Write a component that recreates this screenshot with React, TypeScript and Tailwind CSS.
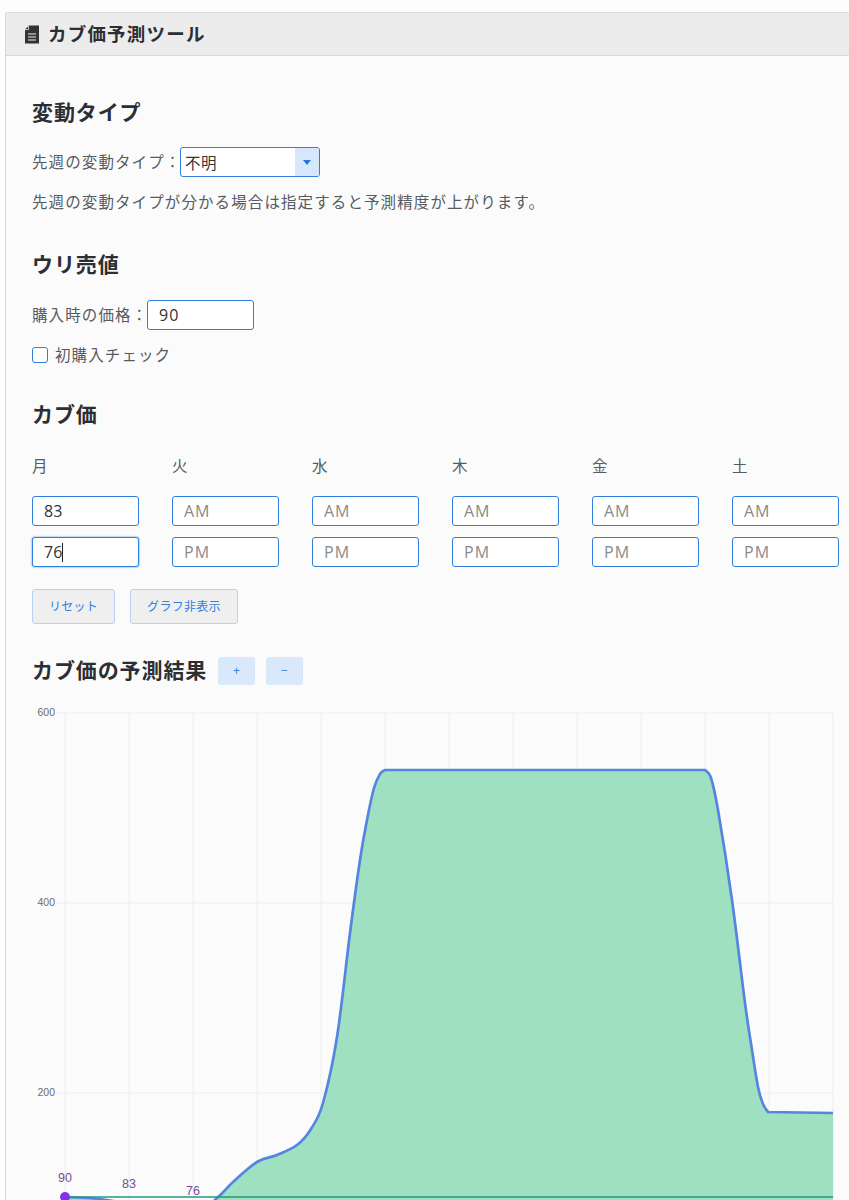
import React from "react";

const days = ["月", "火", "水", "木", "金", "土"];
const gridX = [65, 129, 193, 257, 321, 385, 449, 513, 577, 641, 705, 769, 833];
const gridY = [713, 903, 1093];

const rise: [number, number][] = [
  [65, 1197], [100, 1199], [129, 1204], [193, 1215], [217, 1198], [233, 1182], [257, 1162],
  [277, 1155], [297, 1145], [311, 1129], [323, 1103], [337, 1037], [350, 933], [360, 860],
  [367, 820], [374, 788], [380, 774], [385, 770],
];
const fall: [number, number][] = [
  [705, 770], [711, 778], [718, 810], [732, 900], [745, 1003], [752, 1050], [758, 1087], [763, 1104], [768, 1112],
];

function smooth(pts: [number, number][]) {
  let d = "";
  for (let i = 0; i < pts.length - 1; i++) {
    const p0 = pts[Math.max(0, i - 1)];
    const p1 = pts[i];
    const p2 = pts[i + 1];
    const p3 = pts[Math.min(pts.length - 1, i + 2)];
    const c1x = p1[0] + (p2[0] - p0[0]) / 6;
    const c1y = p1[1] + (p2[1] - p0[1]) / 6;
    const c2x = p2[0] - (p3[0] - p1[0]) / 6;
    const c2y = p2[1] - (p3[1] - p1[1]) / 6;
    d += ` C${c1x.toFixed(1)} ${c1y.toFixed(1)} ${c2x.toFixed(1)} ${c2y.toFixed(1)} ${p2[0]} ${p2[1]}`;
  }
  return d;
}
const line = `M65 1197${smooth(rise)} L705 770${smooth(fall)} L833 1113`;

function Heading({ children, className = "" }: { children: React.ReactNode; className?: string }) {
  return <h2 className={`whitespace-nowrap text-[21px] font-bold leading-[28px] tracking-[0.9px] text-[#2b2f33] ${className}`}>{children}</h2>;
}

function Field({ value, placeholder, focused }: { value?: string; placeholder?: string; focused?: boolean }) {
  return (
    <input
      readOnly
      value={value}
      placeholder={placeholder}
      className={`block h-[30px] w-[107px] rounded-[3px] border border-[#2f7fe0] bg-white pl-[11px] text-[16px] text-[#333] outline-none placeholder:tracking-[1px] placeholder:text-[#8a8a8a] ${focused ? "shadow-[0_0_2px_#2f7fe0]" : ""}`}
    />
  );
}

export default function App() {
  return (
    <div
      className="h-[1200px] w-[849px] overflow-hidden bg-[#fdfdfd] pl-[5px] pt-3 text-[#555b61]"
      style={{ fontFamily: '"Open Sans", "Noto Sans CJK JP", sans-serif' }}
    >
      <div className="h-[1300px] w-[860px] rounded-tl-[2px] border border-r-0 border-[#d9d9d9] bg-[#fbfbfc]">
        <div className="flex h-[43px] items-center gap-[8px] border-b border-[#d9d9d9] bg-[#ececec] pl-[18px]">
          <svg width="16" height="19" viewBox="0 0 16 19" className="shrink-0">
            <path d="M5 0.5h10v18H1V4.5z" fill="#333" />
            <path d="M4 9h8M4 12h8M4 15h8" stroke="#ececec" strokeWidth="1" />
            <path d="M4.6 1v3.6H1" stroke="#ececec" strokeWidth="0.8" fill="none" />
          </svg>
          <h1 className="whitespace-nowrap text-[18.5px] font-bold tracking-[1.2px] text-[#2b2f33]">カブ価予測ツール</h1>
        </div>

        <div className="pl-[26px]">
          <Heading className="mt-[42px]">変動タイプ</Heading>
          <div className="mt-[21px] flex h-[30px] items-center text-[15.5px] tracking-[1.1px]">
            <span className="w-[148px] shrink-0 whitespace-nowrap pt-[2px]">先週の変動タイプ：</span>
            <div className="flex h-[30px] w-[140px] overflow-hidden rounded-[3px] border border-[#2f7fe0] bg-white">
              <span className="flex-1 pl-[4px] leading-[30px] tracking-[0.5px] text-[#333]">不明</span>
              <span className="flex w-[24px] items-center justify-center bg-[#d6e6fb]">
                <span className="h-0 w-0 border-x-[4px] border-t-[5px] border-x-transparent border-t-[#1f78e0]" />
              </span>
            </div>
          </div>
          <p className="mt-[13px] whitespace-nowrap text-[15.5px] leading-[24px] tracking-[1.1px]">
            先週の変動タイプが分かる場合は指定すると予測精度が上がります。
          </p>

          <Heading className="mt-[36px]">ウリ売値</Heading>
          <div className="mt-[22px] flex h-[30px] items-center text-[15.5px] tracking-[1.1px]">
            <span className="w-[115px] shrink-0 whitespace-nowrap pt-[2px]">購入時の価格：</span>
            <Field value="90" />
          </div>
          <label className="mt-[14px] flex h-[22px] items-center gap-[7px] text-[15.5px] tracking-[1.1px]">
            <span className="block h-[16px] w-[16px] rounded-[3px] border border-[#2f7fe0] bg-white" />
            <span className="pt-[2px]">初購入チェック</span>
          </label>

          <Heading className="mt-[34px]">カブ価</Heading>
          <div className="mt-[26px] grid w-[807px] grid-cols-[repeat(6,107px)] gap-x-[33px]">
            {days.map((d) => (
              <div key={d} className="text-[15.5px] leading-[24px]">{d}</div>
            ))}
          </div>
          <div className="mt-[18px] grid w-[807px] grid-cols-[repeat(6,107px)] gap-x-[33px] gap-y-[11px]">
            {days.map((d, i) => (
              <Field key={d} value={i === 0 ? "83" : undefined} placeholder="AM" />
            ))}
            {days.map((d, i) => (
              <div key={d} className="relative">
                <Field value={i === 0 ? "76" : undefined} placeholder="PM" focused={i === 0} />
                {i === 0 && <span className="absolute left-[30px] top-[6px] h-[19px] w-px bg-[#222]" />}
              </div>
            ))}
          </div>

          <div className="mt-[22px] flex gap-[15px]">
            <button className="h-[35px] w-[83px] rounded-[3px] border border-[#b5d2f5] bg-[#efefef] text-[12px] tracking-[0.2px] text-[#2f7fe0]">リセット</button>
            <button className="h-[35px] w-[108px] rounded-[3px] border border-[#b5d2f5] bg-[#efefef] text-[12px] tracking-[0.3px] text-[#2f7fe0]">グラフ非表示</button>
          </div>

          <div className="mt-[33px] flex h-[28px] items-center">
            <Heading className="w-[186px] shrink-0 pb-[2px]">カブ価の予測結果</Heading>
            <button className="h-[28px] w-[37px] rounded-[3px] bg-[#d9e8fb] text-[12px] text-[#2f7fe0]">+</button>
            <button className="ml-[11px] h-[28px] w-[37px] rounded-[3px] bg-[#d9e8fb] text-[12px] text-[#2f7fe0]">−</button>
          </div>

          <svg width="817" height="495" viewBox="32 705 817 495" className="mt-[20px] block" style={{ fontFamily: '"Liberation Sans", sans-serif' }}>
            {gridX.map((x) => (
              <line key={x} x1={x} y1={713} x2={x} y2={1200} stroke="#ededef" strokeWidth="1" />
            ))}
            {gridY.map((y) => (
              <line key={y} x1={57} y1={y} x2={833} y2={y} stroke="#ededef" strokeWidth="1" />
            ))}
            <text x="55" y="716" textAnchor="end" fontSize="10.5" fill="#6b6b6b">600</text>
            <text x="55" y="906" textAnchor="end" fontSize="10.5" fill="#6b6b6b">400</text>
            <text x="55" y="1096" textAnchor="end" fontSize="10.5" fill="#6b6b6b">200</text>
            <path d={`${line} L833 1200 L65 1200 Z`} fill="#9fe0c0" />
            <path d={line} stroke="#5585e0" strokeWidth="2.7" fill="none" />
            <path d="M65 1197 L833 1197" stroke="#1f9a7c" strokeWidth="1.5" fill="none" />
            <circle cx="65" cy="1197" r="5" fill="#8033e8" />
            <text x="65" y="1182" textAnchor="middle" fontSize="12.5" fill="#7d4a96">90</text>
            <text x="129" y="1188" textAnchor="middle" fontSize="12.5" fill="#7d4a96">83</text>
            <text x="193" y="1195" textAnchor="middle" fontSize="12.5" fill="#7d4a96">76</text>
          </svg>
        </div>
      </div>
    </div>
  );
}
